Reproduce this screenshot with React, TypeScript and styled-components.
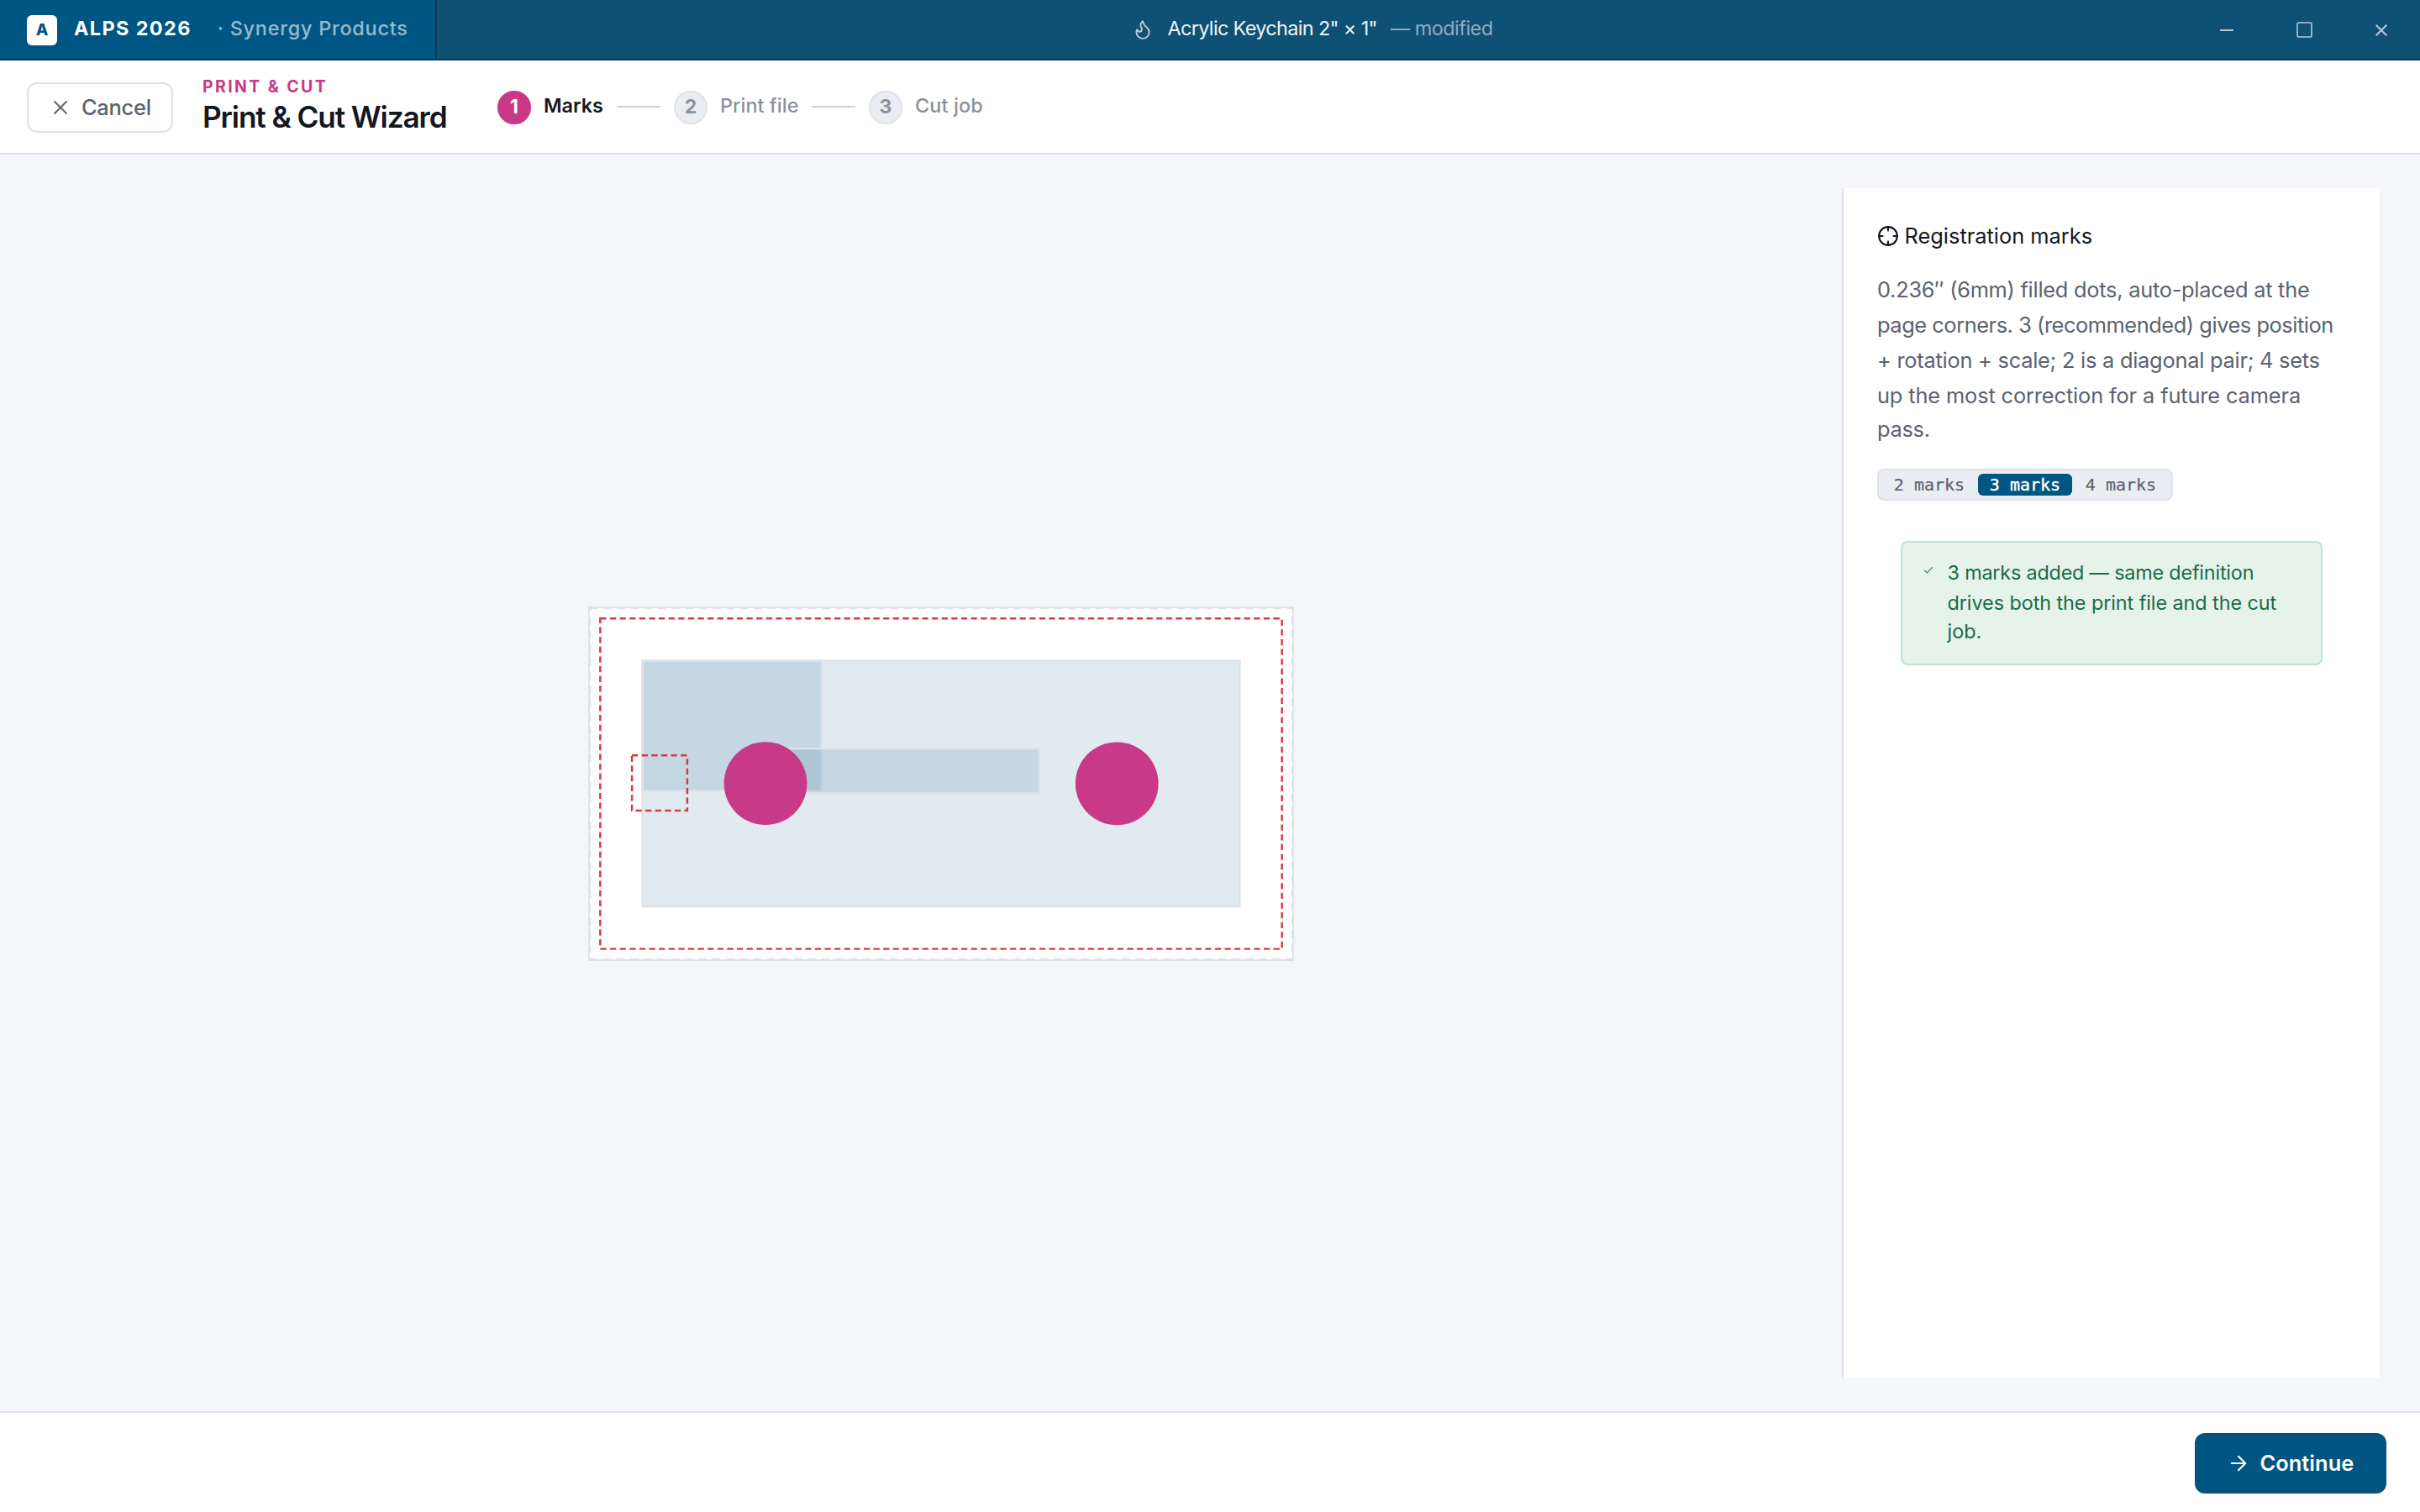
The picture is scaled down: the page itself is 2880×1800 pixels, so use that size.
import React from 'react';
import styled, { createGlobalStyle } from 'styled-components';
import { ArrowRight, Check, Crosshair, X } from 'lucide-react';

const color = {
  brand: '#005682',
  bar: '#0f5075',
  barEdge: '#0a3852',
  magenta: '#c83a88',
  line: '#e0e2ea',
  ink: '#14171f',
  body: '#5b6270',
  muted: '#8b919c',
  canvas: '#f5f6f9',
  chip: '#eaedf2',
  danger: '#d43d3f',
  okText: '#1a6b47',
  okBg: '#e6f3eb',
  okLine: '#bde4cc',
};

const GlobalStyle = createGlobalStyle`
  *, *::before, *::after { box-sizing: border-box; }
  body { margin: 0; background: ${color.canvas}; }
  button { margin: 0; }
`;

const Screen = styled.div`
  display: flex;
  flex-direction: column;
  width: 100vw;
  height: 100vh;
  overflow: hidden;
  font-family: Inter, 'Liberation Sans', sans-serif;
  color: ${color.ink};
`;

/* A single run of text: size, weight, tracking and a small optical lift. */
const Text = styled.span<{ $size: number; $weight?: number; $track?: number; $color?: string; $lift?: number }>`
  display: block;
  font-size: ${p => p.$size}px;
  font-weight: ${p => p.$weight ?? 400};
  letter-spacing: ${p => p.$track ?? 0}px;
  color: ${p => p.$color ?? 'inherit'};
  padding-bottom: ${p => p.$lift ?? 0}px;
  line-height: 36px;
  white-space: nowrap;
`;

const TitleBar = styled.div`
  display: flex;
  flex: none;
  height: 72px;
  background: ${color.bar};
  border-bottom: 2px solid ${color.barEdge};
`;

const Brand = styled.div`
  display: flex;
  align-items: center;
  width: 520px;
  padding: 2px 0 0 32px;
  background: ${color.brand};
  border-right: 2px solid ${color.barEdge};
  color: #fff;
`;

const BrandMark = styled.div`
  display: flex;
  align-items: center;
  justify-content: center;
  width: 36px;
  height: 36px;
  margin-right: 20px;
  border-radius: 6px;
  background: #fff;
`;

const Vendor = styled.div`
  margin-left: 31px;
`;

const Document = styled.div`
  display: flex;
  flex: 1;
  align-items: center;
  justify-content: center;
  gap: 16px;
  padding-top: 2px;
`;

const FlameSvg = styled.svg`
  width: 26px;
  height: 26px;
  margin-bottom: 2px;
  fill: none;
  stroke: rgba(255, 255, 255, 0.7);
  stroke-width: 1.75;
  stroke-linecap: round;
  stroke-linejoin: round;
`;

const WindowButtons = styled.div`
  display: flex;
  padding-top: 2px;
`;

const WindowButton = styled.div`
  display: flex;
  align-items: center;
  justify-content: center;
  width: 92px;
  svg { fill: none; stroke: #b7cad6; stroke-width: 2; }
`;

const Header = styled.header`
  display: flex;
  flex: none;
  align-items: center;
  height: 112px;
  padding: 2px 32px 0;
  background: #fff;
  border-bottom: 2px solid ${color.line};
`;

const CancelButton = styled.button`
  display: flex;
  align-items: center;
  gap: 11px;
  width: 174px;
  height: 60px;
  margin-right: 35px;
  padding: 0 24px;
  border: 2px solid ${color.line};
  border-radius: 12px;
  background: #fff;
  color: ${color.body};
  font-family: inherit;
  svg { flex: none; }
`;

const Heading = styled.div`
  display: flex;
  flex-direction: column;
  width: 351px;
  padding-bottom: 14px;
`;

const Steps = styled.div`
  display: flex;
  align-items: center;
  gap: 16px;
`;

const Step = styled.div<{ $width?: number }>`
  display: flex;
  align-items: center;
  gap: 15px;
  width: ${p => (p.$width ? `${p.$width}px` : 'auto')};
`;

const StepNumber = styled.div<{ $active?: boolean }>`
  display: flex;
  flex: none;
  align-items: center;
  justify-content: center;
  width: 40px;
  height: 40px;
  border-radius: 50%;
  border: 2px solid ${p => (p.$active ? color.magenta : color.line)};
  background: ${p => (p.$active ? color.magenta : color.chip)};
  color: ${p => (p.$active ? '#fff' : color.muted)};
`;

const StepLine = styled.div`
  width: 52px;
  height: 2px;
  margin-bottom: 2px;
  background: #cdd0d8;
`;

const Main = styled.main`
  display: flex;
  flex: 1;
  min-height: 0;
  padding: 40px 48px;
`;

const Stage = styled.section`
  display: flex;
  flex: 1;
  align-items: center;
  justify-content: center;
  padding-top: 2px;
`;

const Page = styled.div`
  width: 840px;
  height: 422px;
  border: 2px solid ${color.line};
  background: #fff;
  svg { display: block; }
`;

const Side = styled.aside`
  width: 640px;
  padding: 41px 40px;
  border-left: 2px solid ${color.line};
  background: #fff;
`;

const SideTitle = styled.div`
  display: flex;
  align-items: center;
  gap: 6.5px;
  height: 32px;
`;

const Lines = styled.div<{ $leading: number; $color: string }>`
  color: ${p => p.$color};
  ${Text} { line-height: ${p => p.$leading}px; }
  ${Text}:last-child { margin-top: -2px; }
`;

const Description = styled.div`
  height: 234px;
  margin-top: 27px;
`;

const Segmented = styled.div`
  display: flex;
  gap: 2px;
  width: 352px;
  height: 38px;
  padding: 4px;
  border: 2px solid ${color.line};
  border-radius: 8px;
  background: ${color.chip};
`;

const Segment = styled.div<{ $active?: boolean }>`
  flex: 1;
  border-radius: 6px;
  background: ${p => (p.$active ? color.brand : 'transparent')};
  color: ${p => (p.$active ? '#fff' : color.body)};
  -webkit-text-stroke: ${p => (p.$active ? 0.4 : 0.2)}px currentColor;
  font: 20px/26px 'DejaVu Sans Mono', monospace;
  text-align: center;
  white-space: nowrap;
`;

const Notice = styled.div`
  display: flex;
  gap: 15.5px;
  width: 502px;
  height: 148px;
  margin: 48px 0 0 28px;
  padding: 18px 24px;
  border: 2px solid ${color.okLine};
  border-radius: 8px;
  background: ${color.okBg};
  color: ${color.okText};
  svg { flex: none; margin-top: 8px; }
`;

const Footer = styled.footer`
  display: flex;
  flex: none;
  align-items: center;
  justify-content: flex-end;
  height: 120px;
  padding: 2px 40px 0;
  border-top: 2px solid ${color.line};
  background: #fff;
`;

const ContinueButton = styled.button`
  display: flex;
  align-items: center;
  gap: 11.5px;
  width: 228px;
  height: 72px;
  padding: 0 36px;
  border: 2px solid ${color.bar};
  border-radius: 12px;
  background: ${color.brand};
  color: #fff;
  font-family: inherit;
  svg { flex: none; }
`;

const description: [string, number][] = [
  ['0.236″ (6mm) filled dots, auto-placed at the', -0.26],
  ['page corners. 3 (recommended) gives position', -0.45],
  ['+ rotation + scale; 2 is a diagonal pair; 4 sets', -0.25],
  ['up the most correction for a future camera', -0.14],
  ['pass.', -0.3],
];

const notice: [string, number][] = [
  ['3 marks added — same definition', -0.2],
  ['drives both the print file and the cut', -0.07],
  ['job.', 0],
];

const steps = [
  { label: 'Marks', width: 126, track: 0 },
  { label: 'Print file', width: 148, track: 0.05 },
  { label: 'Cut job', width: undefined, track: 0.15 },
];

const art = { fill: color.brand, fillOpacity: 0.12, stroke: color.line, strokeWidth: 2.47 };
const cut = { fill: 'none', stroke: color.danger, strokeWidth: 2.47, strokeDasharray: '7.26 4.35' };

function Preview() {
  return (
    <svg width="836" height="418" viewBox="0 0 836 418">
      <rect width="836" height="418" fill="#fff" stroke={color.line} strokeWidth="2.47" strokeDasharray="9.29 6.97" />
      <rect x="62.7" y="62.6" width="710.6" height="292.6" {...art} />
      <rect x="62.7" y="62.6" width="213.3" height="155" {...art} />
      <rect x="204" y="167.1" width="331" height="53" {...art} />
      <rect x="50.1" y="175.3" width="65.8" height="65.8" {...cut} />
      <rect x="12.34" y="12.34" width="811.3" height="393.3" {...cut} />
      <circle cx="209" cy="208.7" r="49.4" fill={color.magenta} />
      <circle cx="627.2" cy="208.8" r="49.4" fill={color.magenta} />
    </svg>
  );
}

export default function App() {
  return (
    <Screen>
      <GlobalStyle />
      <TitleBar>
        <Brand>
          <BrandMark>
            <Text $size={19} $weight={800} $color={color.brand} $lift={1}>A</Text>
          </BrandMark>
          <Text $size={23.4} $weight={700} $track={1.4} $lift={5}>ALPS 2026</Text>
          <Vendor>
            <Text $size={23.4} $weight={500} $track={0.8} $lift={5} $color="rgba(255,255,255,0.6)">· Synergy Products</Text>
          </Vendor>
        </Brand>
        <Document>
          <FlameSvg viewBox="0 0 24 24">
            <path d="M8.5 14.5A2.5 2.5 0 0 0 11 12c0-1.38-.5-2-1-3-1.072-2.143-.224-4.054 2-6 .5 2.5 2 4.9 4 6.5 2 1.6 3 3.5 3 5.5a7 7 0 1 1-14 0c0-1.153.433-2.294 1-3a2.5 2.5 0 0 0 2.5 2.5z" />
          </FlameSvg>
          <Text $size={23.4} $weight={420} $track={-0.63} $lift={5} $color="#eef3f6">Acrylic Keychain 2" × 1"</Text>
          <Text $size={23.4} $track={-0.5} $lift={5} $color="rgba(255,255,255,0.53)">— modified</Text>
        </Document>
        <WindowButtons>
          <WindowButton>
            <svg width="16" height="2"><path d="M0 1H16" /></svg>
          </WindowButton>
          <WindowButton>
            <svg width="20" height="22"><rect x="2" y="2" width="17" height="17" rx="1.5" style={{ strokeWidth: 1.6 }} /></svg>
          </WindowButton>
          <WindowButton>
            <svg width="14" height="14"><path d="M.7 .7L13.3 13.3M13.3 .7L.7 13.3" /></svg>
          </WindowButton>
        </WindowButtons>
      </TitleBar>

      <Header>
        <CancelButton>
          <X size={28} strokeWidth={1.6} />
          <Text $size={25.4} $weight={500} $track={-0.25} $lift={1}>Cancel</Text>
        </CancelButton>
        <Heading>
          <Text $size={19.4} $weight={700} $track={2.45} $color={color.magenta}>PRINT &amp; CUT</Text>
          <Text $size={35.2} $weight={600} $track={-1.1}>Print &amp; Cut Wizard</Text>
        </Heading>
        <Steps>
          {steps.map((s, i) => (
            <React.Fragment key={s.label}>
              {i > 0 && <StepLine />}
              <Step $width={s.width}>
                <StepNumber $active={i === 0}>
                  <Text $size={23} $weight={700} $lift={3}>{i + 1}</Text>
                </StepNumber>
                <Text $size={23.4} $weight={i === 0 ? 600 : 500} $track={s.track} $lift={4} $color={i === 0 ? color.ink : color.muted}>
                  {s.label}
                </Text>
              </Step>
            </React.Fragment>
          ))}
        </Steps>
      </Header>

      <Main>
        <Stage>
          <Page>
            <Preview />
          </Page>
        </Stage>
        <Side>
          <SideTitle>
            <Crosshair size={26} strokeWidth={2} />
            <Text $size={25.4}>Registration marks</Text>
          </SideTitle>
          <Description>
            <Lines $leading={42} $color={color.body}>
              {description.map(([t, track]) => <Text key={t} $size={25.4} $track={track}>{t}</Text>)}
            </Lines>
          </Description>
          <Segmented>
            <Segment>2 marks</Segment>
            <Segment $active>3 marks</Segment>
            <Segment>4 marks</Segment>
          </Segmented>
          <Notice>
            <Check size={14} strokeWidth={1.75} />
            <Lines $leading={36} $color={color.okText}>
              {notice.map(([t, track]) => <Text key={t} $size={23.4} $track={track}>{t}</Text>)}
            </Lines>
          </Notice>
        </Side>
      </Main>

      <Footer>
        <ContinueButton>
          <ArrowRight size={28} strokeWidth={1.9} />
          <Text $size={25.4} $weight={600} $track={0.05} $lift={1}>Continue</Text>
        </ContinueButton>
      </Footer>
    </Screen>
  );
}
